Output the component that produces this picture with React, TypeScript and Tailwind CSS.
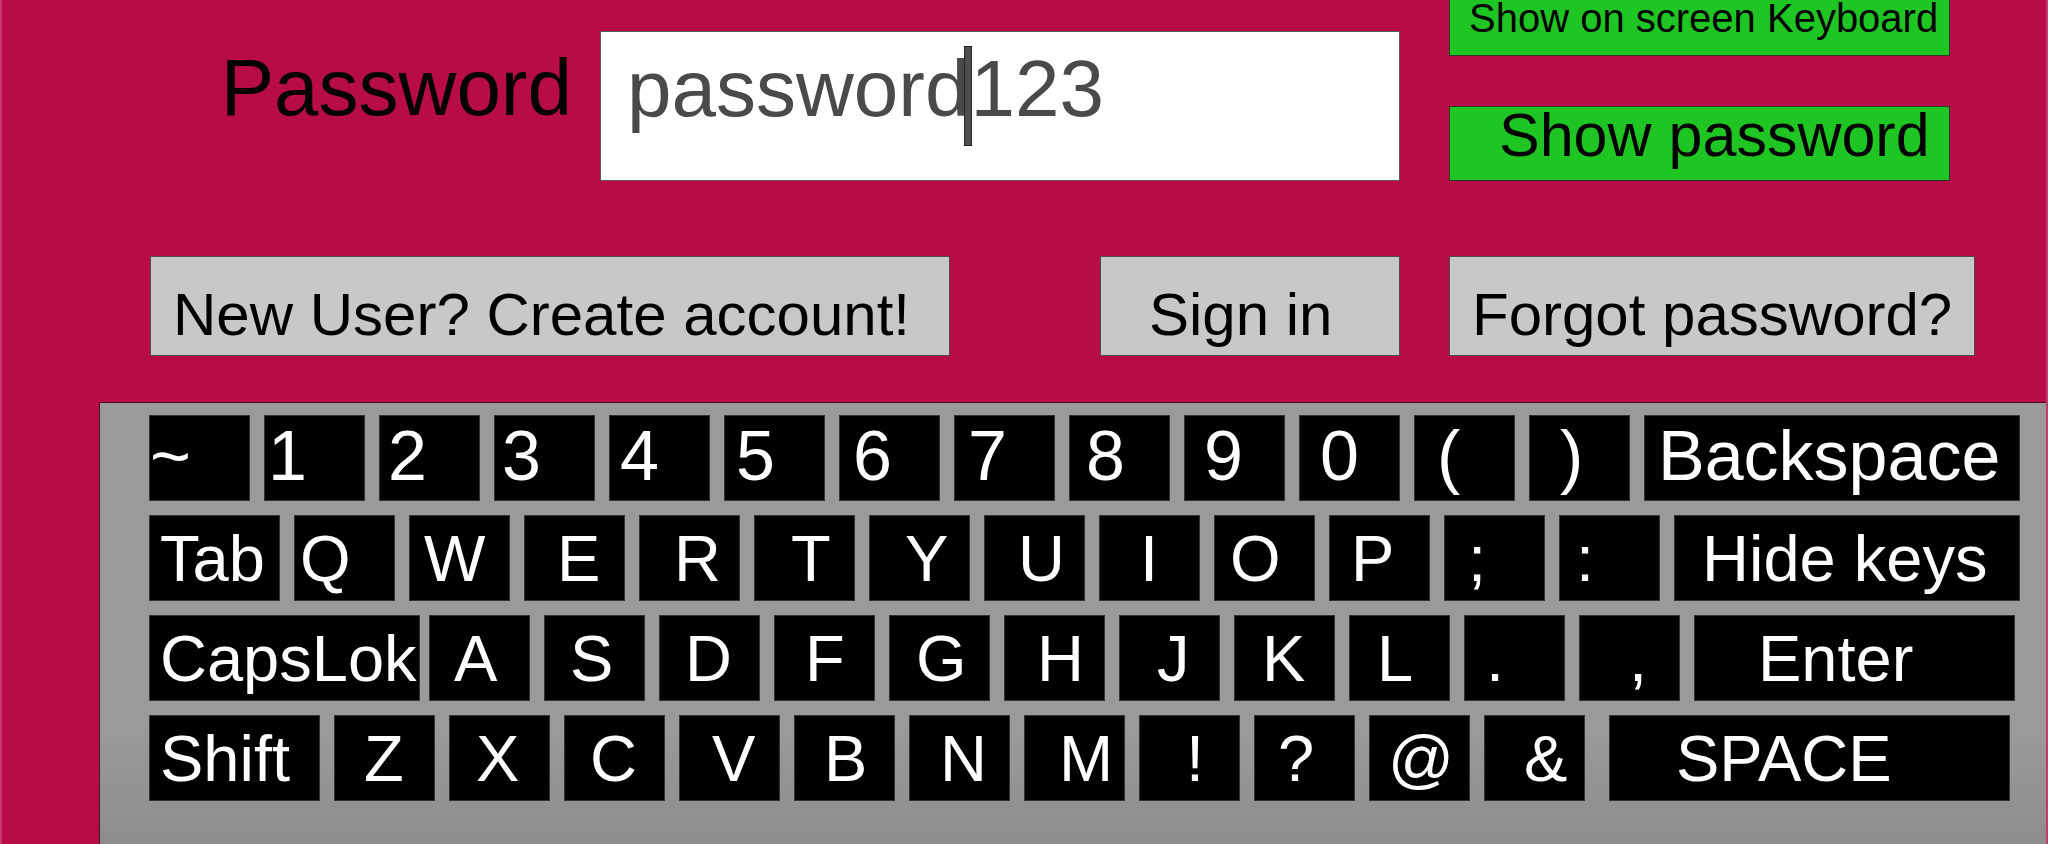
type Key = { label: string; cls: string };

// number row uses slightly bigger labels than the letter rows
const numberRow: Key[] = [
  { label: "~", cls: "w-[101px] pl-0" },
  { label: "1", cls: "w-[101px] pl-[3px]" },
  { label: "2", cls: "w-[101px] pl-[8px]" },
  { label: "3", cls: "w-[101px] pl-[7px]" },
  { label: "4", cls: "w-[101px] pl-[10px]" },
  { label: "5", cls: "w-[101px] pl-[11px]" },
  { label: "6", cls: "w-[101px] pl-[13px]" },
  { label: "7", cls: "w-[101px] pl-[13px]" },
  { label: "8", cls: "w-[101px] pl-[16px]" },
  { label: "9", cls: "w-[101px] pl-[19px]" },
  { label: "0", cls: "w-[101px] pl-[20px]" },
  { label: "(", cls: "w-[101px] pl-[22px]" },
  { label: ")", cls: "w-[101px] pl-[30px]" },
  { label: "Backspace", cls: "w-[376px] pl-[13px]" },
];

const letterRows: Key[][] = [
  [
    { label: "Tab", cls: "w-[131px] pl-[10px]" },
    { label: "Q", cls: "w-[101px] pl-[5px]" },
    { label: "W", cls: "w-[101px] pl-[14px]" },
    { label: "E", cls: "w-[101px] pl-[32px]" },
    { label: "R", cls: "w-[101px] pl-[34px]" },
    { label: "T", cls: "w-[101px] pl-[36px]" },
    { label: "Y", cls: "w-[101px] pl-[35px]" },
    { label: "U", cls: "w-[101px] pl-[33px]" },
    { label: "I", cls: "w-[101px] pl-[40px]" },
    { label: "O", cls: "w-[101px] pl-[15px]" },
    { label: "P", cls: "w-[101px] pl-[21px]" },
    { label: ";", cls: "w-[101px] pl-[23px]" },
    { label: ":", cls: "w-[101px] pl-[16px]" },
    { label: "Hide keys", cls: "w-[346px] pl-[27px]" },
  ],
  [
    { label: "CapsLok", cls: "w-[271px] pl-[10px] -mr-[5px]" },
    { label: "A", cls: "w-[101px] pl-[24px]" },
    { label: "S", cls: "w-[101px] pl-[25px]" },
    { label: "D", cls: "w-[101px] pl-[25px]" },
    { label: "F", cls: "w-[101px] pl-[30px]" },
    { label: "G", cls: "w-[101px] pl-[26px]" },
    { label: "H", cls: "w-[101px] pl-[32px]" },
    { label: "J", cls: "w-[101px] pl-[37px]" },
    { label: "K", cls: "w-[101px] pl-[27px]" },
    { label: "L", cls: "w-[101px] pl-[27px]" },
    { label: ".", cls: "w-[101px] pl-[21px]" },
    { label: ",", cls: "w-[101px] pl-[49px]" },
    { label: "Enter", cls: "w-[321px] pl-[63px]" },
  ],
  [
    { label: "Shift", cls: "w-[171px] pl-[10px]" },
    { label: "Z", cls: "w-[101px] pl-[29px]" },
    { label: "X", cls: "w-[101px] pl-[26px]" },
    { label: "C", cls: "w-[101px] pl-[25px]" },
    { label: "V", cls: "w-[101px] pl-[32px]" },
    { label: "B", cls: "w-[101px] pl-[29px]" },
    { label: "N", cls: "w-[101px] pl-[30px]" },
    { label: "M", cls: "w-[101px] pl-[34px]" },
    { label: "!", cls: "w-[101px] pl-[46px]" },
    { label: "?", cls: "w-[101px] pl-[23px]" },
    { label: "@", cls: "w-[101px] pl-[18px]" },
    { label: "&", cls: "w-[101px] pl-[39px]" },
    { label: "SPACE", cls: "w-[401px] pl-[66px] ml-[10px]" },
  ],
];

// buttons centre their content vertically, so paddings are set to fill the inner box exactly
const KEY_BASE =
  "h-[86px] shrink-0 bg-black border border-[#333] text-white text-left whitespace-nowrap overflow-hidden";

const KeyRow = ({ keys, big }: { keys: Key[]; big?: boolean }) => (
  <div className="flex gap-[14px]">
    {keys.map((k) => (
      <button
        key={k.label}
        type="button"
        className={`${KEY_BASE} ${k.cls} ${
          big ? "text-[70px] leading-[81px] pb-[3px]" : "text-[65px] leading-[83px] pt-[1px]"
        }`}
      >
        {k.label}
      </button>
    ))}
  </div>
);

const GREEN_BTN =
  "block w-[501px] h-[75px] bg-[#1fc623] border border-[#2b3a2b] text-black text-left whitespace-nowrap";
const GREY_BTN =
  "h-[100px] bg-[#c8c8c8] border border-[#4d4d4d] text-black text-left text-[60px] leading-[60px] pt-[28px] pb-[10px] whitespace-nowrap";

export default function App() {
  return (
    <div className="h-screen w-full overflow-hidden bg-[#b80c48] border-x-2 border-[#c43a6c] font-['Liberation_Sans',Arial,sans-serif]">
      {/* password row */}
      <div className="flex items-start">
        <label className="w-[598px] shrink-0 pt-[48px] pr-[28px] text-right text-[80px] leading-[80px] text-black">
          Password
        </label>
        <div className="mt-[31px] w-[800px] h-[150px] shrink-0 bg-white border border-[#5a5a5a] pl-[26px] pt-[16px] text-[80px] leading-[80px] text-[#4a4a4a] whitespace-nowrap">
          password
          <span className="inline-block align-baseline w-[8px] h-[100px] -mt-[2px] -mb-[30px] -ml-[5px] -mr-[2px] bg-[#4d4d4d] border border-[#262626]"></span>
          123
        </div>
        <div className="ml-[49px] flex flex-col">
          <button type="button" className={`${GREEN_BTN} -mt-[19px] pl-[19px] text-[40px] leading-[73px]`}>
            Show on screen Keyboard
          </button>
          <button type="button" className={`${GREEN_BTN} mt-[50px] pl-[49px] pb-[16px] text-[61px] leading-[57px]`}>
            Show password
          </button>
        </div>
      </div>

      {/* action buttons */}
      <div className="mt-[75px] flex">
        <button type="button" className={`${GREY_BTN} ml-[148px] w-[800px] pl-[22px]`}>
          New User? Create account!
        </button>
        <button type="button" className={`${GREY_BTN} ml-[150px] w-[300px] pl-[48px]`}>
          Sign in
        </button>
        <button type="button" className={`${GREY_BTN} ml-[49px] w-[526px] pl-[22px]`}>
          Forgot password?
        </button>
      </div>

      {/* on screen keyboard */}
      <div className="mt-[46px] ml-[97px] h-[460px] border-t border-l border-[#4a1026] bg-linear-to-b from-[#9a9a9a] from-70% to-[#8b8b8b] pl-[49px] pt-[12px]">
        <div className="flex flex-col gap-[14px]">
          <KeyRow keys={numberRow} big />
          {letterRows.map((row, i) => (
            <KeyRow key={i} keys={row} />
          ))}
        </div>
      </div>
    </div>
  );
}
